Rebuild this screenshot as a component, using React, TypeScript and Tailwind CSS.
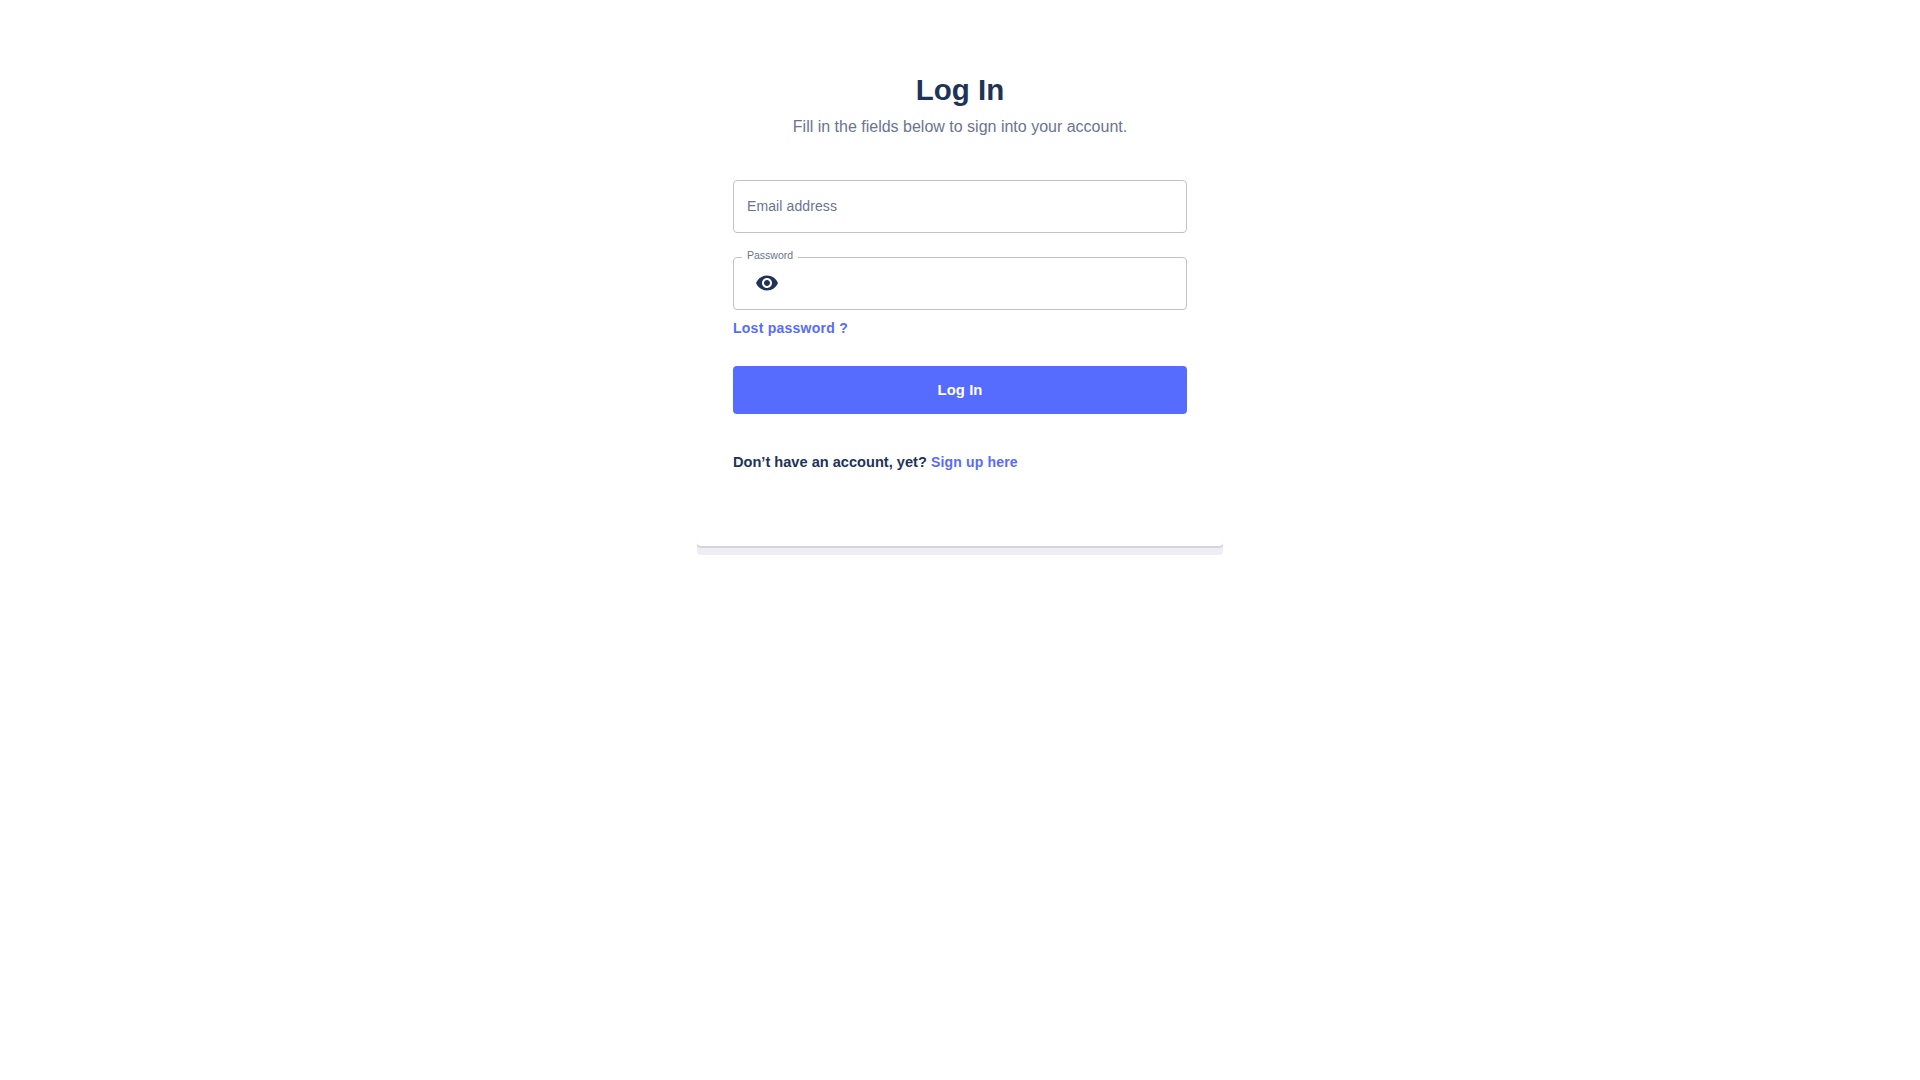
import { MdVisibility } from "react-icons/md";

export default function App() {
  return (
    <div className="min-h-screen bg-white font-['Liberation_Sans',Arial,sans-serif] flex flex-col items-center">
      <div className="w-[526px] mt-[70px] h-[476px] rounded-b-[4px] bg-white shadow-[0_2px_0_#d3d3e4,0_9px_0_#eeeef4] px-9 flex flex-col">
        <h1 className="text-[29.5px] leading-[40px] font-bold text-[#1f3358] text-center">Log In</h1>
        <p className="text-base leading-[24px] text-[#6a7490] text-center mt-[5px]">
          Fill in the fields below to sign into your account.
        </p>
        <div className="mt-[41px] h-[53px] border border-[#c2c2c2] rounded-[4px] pl-[13px] pb-[2px] flex items-center text-sm tracking-[0.1px] text-[#6a7490]">
          Email address
        </div>
        <fieldset className="mt-[18px] h-[59px] border border-[#c2c2c2] rounded-[4px] pl-[16px]">
          <legend className="relative -top-[2px] ml-[-8px] px-[5px] text-[10.5px] leading-[12px] text-[#6a7490]">Password</legend>
          <MdVisibility className="text-[#1f3358] mt-[8px] ml-[5px]" size={24} />
        </fieldset>
        <a className="mt-[8px] text-sm leading-[20px] font-bold tracking-[0.25px] text-[#566bff]">Lost password ?</a>
        <button className="mt-[28px] h-[48px] rounded-[4px] bg-[#566bff] text-white text-[14.8px] font-bold tracking-[0.1px]">
          Log In
        </button>
        <p className="mt-[38px] text-[14.6px] leading-[20px] font-bold text-[#22335a]">
          Don’t have an account, yet?{" "}
          <a className="text-[#566bff] text-sm tracking-[0.18px]">Sign up here</a>
        </p>
      </div>
    </div>
  );
}
